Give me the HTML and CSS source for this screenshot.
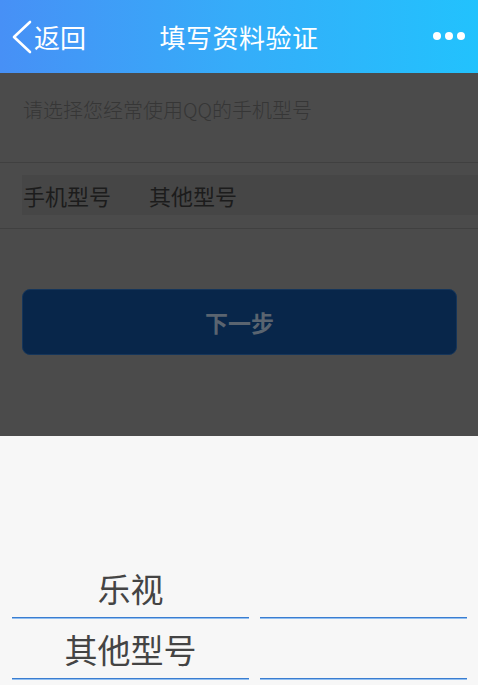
FILE: index.html
```html
<!DOCTYPE html>
<html lang="zh-CN">
<head>
<meta charset="utf-8">
<title>填写资料验证</title>
<link rel="stylesheet" href="styles.css">
</head>
<body>
<div class="app">
  <header class="nav">
    <div class="nav-left">
      <svg class="chev" width="22" height="34" viewBox="0 0 22 34"><polyline points="19,2 3,17 19,32" fill="none" stroke="#fff" stroke-width="2.6" stroke-linecap="round" stroke-linejoin="round"/></svg>
      <span class="back-text">返回</span>
    </div>
    <div class="nav-title">填写资料验证</div>
    <div class="nav-more"><i></i><i></i><i></i></div>
  </header>
  <main class="content">
    <p class="hint">请选择您经常使用QQ的手机型号</p>
    <div class="field">
      <div class="field-row">
        <span class="label">手机型号</span>
        <span class="value">其他型号</span>
      </div>
    </div>
    <button class="next">下一步</button>
  </main>
  <section class="picker">
    <div class="cols">
      <div class="col">
        <div class="item">乐视</div>
        <div class="item">其他型号</div>
      </div>
      <div class="col">
        <div class="item"></div>
        <div class="item"></div>
      </div>
    </div>
  </section>
</div>
</body>
</html>
```
FILE: styles.css
```css
* { box-sizing: border-box; }
html, body { margin: 0; padding: 0; }
body {
  font-family: "Noto Sans CJK SC", "Noto Sans", sans-serif;
  background: #4b4b4b;
}
.app {
  width: 478px;
  height: 685px;
  display: flex;
  flex-direction: column;
  overflow: hidden;
}
.nav {
  height: 73px;
  flex: none;
  background: linear-gradient(90deg, #4790f6 0%, #35adf9 50%, #22c2fd 100%);
  display: grid;
  grid-template-columns: 1fr auto 1fr;
  align-items: center;
  color: #fff;
}
.nav-left {
  display: flex;
  align-items: center;
  padding-left: 11px;
  gap: 1px;
}
.chev { display: block; margin-top: 1px; }
.back-text {
  font-size: 26px;
  line-height: 30px;
}
.nav-title {
  font-size: 26px;
  line-height: 30px;
  letter-spacing: 0.5px;
}
.nav-more {
  justify-self: end;
  display: flex;
  gap: 4px;
  padding-right: 13px;
  margin-top: -1px;
}
.nav-more i {
  display: block;
  width: 8px;
  height: 8px;
  border-radius: 50%;
  background: #fff;
}
.content {
  height: 363px;
  flex: none;
  background: #4b4b4b;
  padding-top: 23px;
}
.hint {
  margin: 0 0 39px 23px;
  font-size: 20px;
  line-height: 27px;
  color: #363636;
  font-weight: 300;
}
.field {
  border-top: 1px solid #404040;
  border-bottom: 1px solid #404040;
  padding: 12px 0 13px 22px;
}
.field-row {
  height: 40px;
  background: #464646;
  display: flex;
  align-items: center;
  color: #1c1c1c;
  font-size: 22px;
  line-height: 28px;
}
.label {
  width: 127px;
  padding-left: 1px;
}
.next {
  display: flex;
  align-items: center;
  justify-content: center;
  margin: 60px 21px 0 22px;
  width: 435px;
  height: 66px;
  border: 1px solid #15355a;
  border-radius: 8px;
  background: #08264a;
  color: #5a6470;
  font-family: inherit;
  font-size: 23px;
  font-weight: bold;
  padding: 0;
}
.picker {
  flex: 1;
  background: #f7f7f7;
  display: flex;
  flex-direction: column;
  justify-content: flex-end;
  padding: 0 11px 5px 12px;
}
.cols {
  display: grid;
  grid-template-columns: 237px 207px;
  gap: 11px;
}
.item {
  height: 61px;
  border-bottom: 1px solid #3a7dd0;
  box-shadow: 0 1px 0 #92bff1;
  margin-bottom: 1px;
  display: flex;
  align-items: center;
  justify-content: center;
  font-size: 33px;
  line-height: 42px;
  color: #444;
  padding-top: 1px;
}
.item + .item { height: 60px; }
```
